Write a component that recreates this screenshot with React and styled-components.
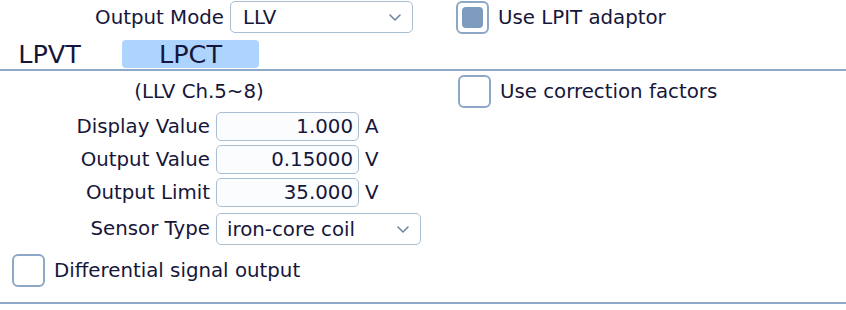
import React from "react";
import styled, { createGlobalStyle } from "styled-components";

const Global = createGlobalStyle`
  body { margin: 0; background: #ffffff; font-family: "DejaVu Sans", "Liberation Sans", sans-serif; color: #16163a; }
`;

const Page = styled.div`
  width: 846px;
  height: 310px;
  display: flex;
  flex-direction: column;
  font-size: 19.8px;
`;

const TopRow = styled.div`
  display: flex;
  align-items: center;
  height: 32px;
  margin-top: 1px;
`;

const Label = styled.div`
  width: ${(p) => p.w}px;
  text-align: right;
  padding-right: 6px;
  box-sizing: border-box;
  white-space: nowrap;
`;

const SelectBox = styled.div`
  box-sizing: border-box;
  width: ${(p) => p.w}px;
  height: 32px;
  border: 1px solid #a9bdd3;
  border-radius: 5px;
  display: flex;
  align-items: center;
  justify-content: space-between;
  padding: 0 10px 0 12px;
  background: #fff;
`;

const Chevron = () => (
  <svg width="14" height="9" viewBox="0 0 14 9">
    <path d="M2 2 L7 7 L12 2" fill="none" stroke="#6f86a3" strokeWidth="1.6" strokeLinecap="round" strokeLinejoin="round" />
  </svg>
);

const CheckWrap = styled.label`
  display: flex;
  align-items: center;
  gap: 9px;
  margin-left: ${(p) => p.ml || 0}px;
  white-space: nowrap;
`;

const Box = styled.span`
  box-sizing: border-box;
  width: 33px;
  height: 33px;
  border: 2px solid #8da7c6;
  border-radius: 6px;
  display: flex;
  align-items: center;
  justify-content: center;
  background: #fff;
`;

const Fill = styled.span`
  width: 21px;
  height: 21px;
  border-radius: 4px;
  background: #7d9bbd;
`;

const Check = ({ checked, children, ml }) => (
  <CheckWrap ml={ml}>
    <Box>{checked && <Fill />}</Box>
    <span>{children}</span>
  </CheckWrap>
);

const Tabs = styled.div`
  display: flex;
  align-items: flex-end;
  margin-top: 7px;
  height: 28px;
  border-bottom: 2px solid #8fa9c9;
  padding-bottom: 1px;
`;

const Tab = styled.div`
  width: ${(p) => p.w}px;
  margin-left: ${(p) => p.ml}px;
  height: 28px;
  line-height: 28px;
  text-align: center;
  font-size: 25.5px;
  border-radius: 4px;
  background: ${(p) => (p.active ? "#acd4fe" : "transparent")};
`;

const Content = styled.div`
  display: flex;
  flex-direction: column;
  border-bottom: 2px solid #8fa9c9;
  padding-bottom: 15px;
`;

const HeadRow = styled.div`
  display: flex;
  align-items: center;
  margin-top: 4px;
  height: 33px;
`;

const Channel = styled.div`
  width: 398px;
  text-align: center;
`;

const Form = styled.div`
  display: grid;
  grid-template-columns: 210px auto 1fr;
  column-gap: 6px;
  row-gap: 4px;
  align-items: center;
  margin-top: 4px;
`;

const FieldLabel = styled.div`
  text-align: right;
  white-space: nowrap;
`;

const Input = styled.div`
  box-sizing: border-box;
  width: 143px;
  height: 29px;
  border: 1px solid #a9bdd3;
  border-radius: 5px;
  background: #fbfcfd;
  text-align: right;
  padding-right: 5px;
  line-height: 27px;
`;

const Unit = styled.div``;

const SensorRow = styled.div`
  grid-column: 2 / 4;
  margin-top: 2px;
`;

const DiffRow = styled.div`
  margin-top: 9px;
  margin-left: 12px;
`;

const fields = [
  ["Display Value", "1.000", "A"],
  ["Output Value", "0.15000", "V"],
  ["Output Limit", "35.000", "V"],
];

export default function App() {
  return (
    <Page>
      <Global />
      <TopRow>
        <Label w={230}>Output Mode</Label>
        <SelectBox w={183}>
          <span>LLV</span>
          <Chevron />
        </SelectBox>
        <Check checked ml={43}>Use LPIT adaptor</Check>
      </TopRow>
      <Tabs>
        <Tab w={99} ml={0}>LPVT</Tab>
        <Tab w={137} ml={23} active>LPCT</Tab>
      </Tabs>
      <Content>
        <HeadRow>
          <Channel>(LLV Ch.5~8)</Channel>
          <Check ml={60}>Use correction factors</Check>
        </HeadRow>
        <Form>
          {fields.map(([l, v, u]) => (
            <React.Fragment key={l}>
              <FieldLabel>{l}</FieldLabel>
              <Input>{v}</Input>
              <Unit>{u}</Unit>
            </React.Fragment>
          ))}
          <FieldLabel>Sensor Type</FieldLabel>
          <SensorRow>
            <SelectBox w={205}>
              <span style={{ marginLeft: -2 }}>iron-core coil</span>
              <Chevron />
            </SelectBox>
          </SensorRow>
        </Form>
        <DiffRow>
          <Check>Differential signal output</Check>
        </DiffRow>
      </Content>
    </Page>
  );
}
